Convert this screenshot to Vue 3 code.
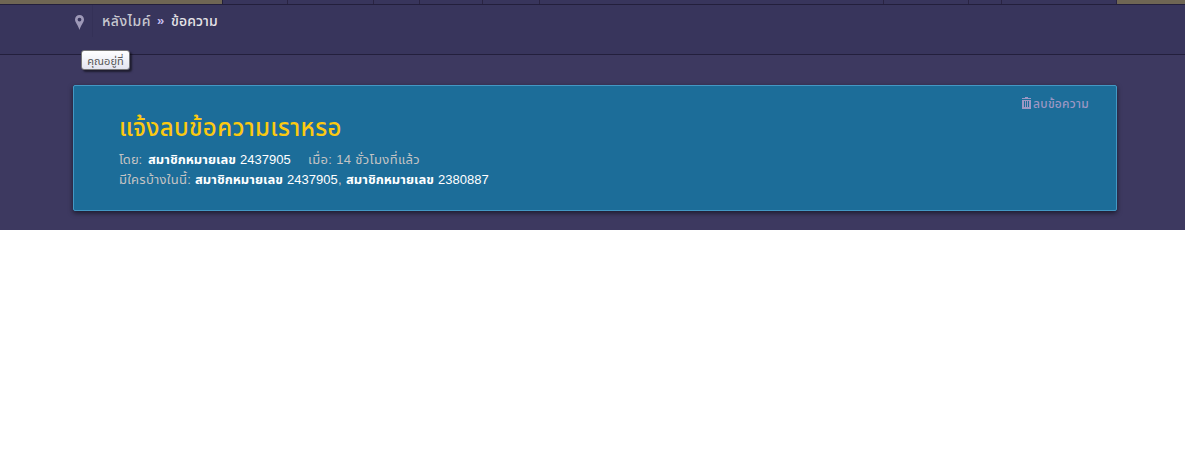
<script setup>
import { ref } from 'vue'

const navWidths = [65, 86, 46, 63, 57, 344, 85, 33, 115]
const members = ref(['2437905', '2380887'])
</script>

<template>
  <div class="page">
    <div class="navbar">
      <div class="nav-side nav-left"></div>
      <div v-for="(w, i) in navWidths" :key="i" class="nav-item" :style="{ width: w + 'px' }"></div>
      <div class="nav-side nav-right"></div>
    </div>

    <div class="breadcrumb">
      <div class="pin">
        <svg width="9" height="15" viewBox="0 0 9 15">
          <path fill-rule="evenodd" d="M4.5 0C2 0 0 2 0 4.5C0 7.5 3.2 10 4.5 15C5.8 10 9 7.5 9 4.5C9 2 7 0 4.5 0ZM4.5 2.7A1.9 1.9 0 1 1 4.5 6.5A1.9 1.9 0 1 1 4.5 2.7Z" />
        </svg>
        <span class="tooltip"><span class="tooltip-text">คุณอยู่ที่</span></span>
      </div>
      <div class="crumbs">
        <span class="crumb-link">หลังไมค์</span>
        <span class="arrow">»</span>
        <span class="crumb-current">ข้อความ</span>
      </div>
    </div>

    <div class="content">
      <div class="message">
        <div class="message-main">
          <h2 class="title">แจ้งลบข้อความเราหรอ</h2>
          <div class="line">
            <span class="label by">โดย:</span>
            <span class="member">สมาชิกหมายเลข</span>
            <span class="number">2437905</span>
            <span class="label when">เมื่อ: 14 ชั่วโมงที่แล้ว</span>
          </div>
          <div class="line">
            <span class="label who">มีใครบ้างในนี้:</span>
            <template v-for="(m, i) in members" :key="m">
              <span class="member">สมาชิกหมายเลข</span>
              <span class="number">{{ m }}</span>
              <span v-if="i < members.length - 1" class="label comma">,</span>
            </template>
          </div>
        </div>
        <div class="delete">
          <svg width="9" height="12" viewBox="0 0 9 12">
            <path fill-rule="evenodd" d="M3 0H6V1H9V2H0V1H3ZM0 3H9V12H0ZM2 4V10H3V4ZM4 4V10H5V4ZM6 4V10H7V4Z" />
          </svg>
          <span class="delete-text">ลบข้อความ</span>
        </div>
      </div>
    </div>
  </div>
</template>

<style>
body {
  background: #fff;
}
</style>

<style scoped>
.page {
  height: 230px;
  background: #3d3960;
  font-family: "Liberation Sans", "Noto Sans Thai", sans-serif;
  font-size: 13px;
  color: #c8c8d0;
  white-space: nowrap;
}

.navbar {
  display: flex;
  height: 4px;
  background: #38355c;
  border-bottom: 1px solid #231f3c;
}

.nav-side {
  background: #6f6654;
}

.nav-left {
  width: 222px;
  border-right: 1px solid #231f3c;
}

.nav-item {
  box-sizing: border-box;
  border-right: 1px solid #2a2443;
}

.nav-right {
  flex: 1;
}

.breadcrumb {
  box-sizing: border-box;
  display: flex;
  height: 50px;
  padding: 0 0 0 73px;
  background: #38355c;
  border-bottom: 1px solid #231f3c;
}

.pin {
  position: relative;
  box-sizing: border-box;
  width: 20px;
  height: 32px;
  padding: 10px 0 0 2px;
  border-right: 1px solid #343157;
}

.pin svg {
  display: block;
  fill: #9e99b8;
}

.tooltip {
  position: absolute;
  left: 8px;
  top: 45px;
  box-sizing: border-box;
  display: flex;
  align-items: center;
  justify-content: center;
  width: 49px;
  height: 20px;
  padding-top: 2px;
  border: 1px solid #767676;
  border-radius: 3px;
  background: linear-gradient(#fff, #e4e5f0);
  box-shadow: 2px 2px 2px rgba(0, 0, 0, 0.5);
  color: #575757;
  font-size: 11px;
}

.crumbs {
  display: flex;
  height: 32px;
  padding-left: 9px;
  line-height: 32px;
  font-size: 14px;
  font-weight: 500;
}

.crumb-link {
  width: 55px;
  letter-spacing: 0.5px;
}

.arrow {
  width: 14px;
  font-size: 13px;
  font-weight: bold;
  color: #c4bdf0;
}

.crumb-current {
  letter-spacing: 0.1px;
  color: #e6e4e8;
}

.content {
  padding: 30px 68px 0 73px;
}

.message {
  box-sizing: border-box;
  display: flex;
  justify-content: space-between;
  height: 126px;
  padding: 0 27px 0 45px;
  background: #1c6d99;
  border: 1px solid #4398c4;
  border-radius: 2px;
  box-shadow: 0 2px 5px rgba(0, 0, 0, 0.55);
}

.title {
  margin: 24px 0 0;
  height: 40px;
  line-height: 36px;
  font-size: 24px;
  font-weight: 500;
  letter-spacing: 0.35px;
  color: #fbc911;
}

.line {
  display: flex;
  height: 20px;
  line-height: 20px;
}

.label {
  color: #c4c4c4;
}

.by {
  width: 29px;
}

.who {
  width: 76px;
  letter-spacing: 0.25px;
}

.member {
  width: 92px;
  font-weight: bold;
  color: #fff;
}

.number {
  width: 51px;
  color: #fff;
}

.when {
  margin-left: 17px;
  letter-spacing: 0.35px;
}

.comma {
  width: 8px;
}

.delete {
  display: flex;
  height: 36px;
  align-items: center;
  color: #9c97c4;
  font-size: 12px;
  font-weight: 500;
}

.delete svg {
  margin-right: 2px;
  margin-bottom: 2px;
  fill: #9c97c4;
}

.delete-text {
  letter-spacing: 0.25px;
}
</style>
